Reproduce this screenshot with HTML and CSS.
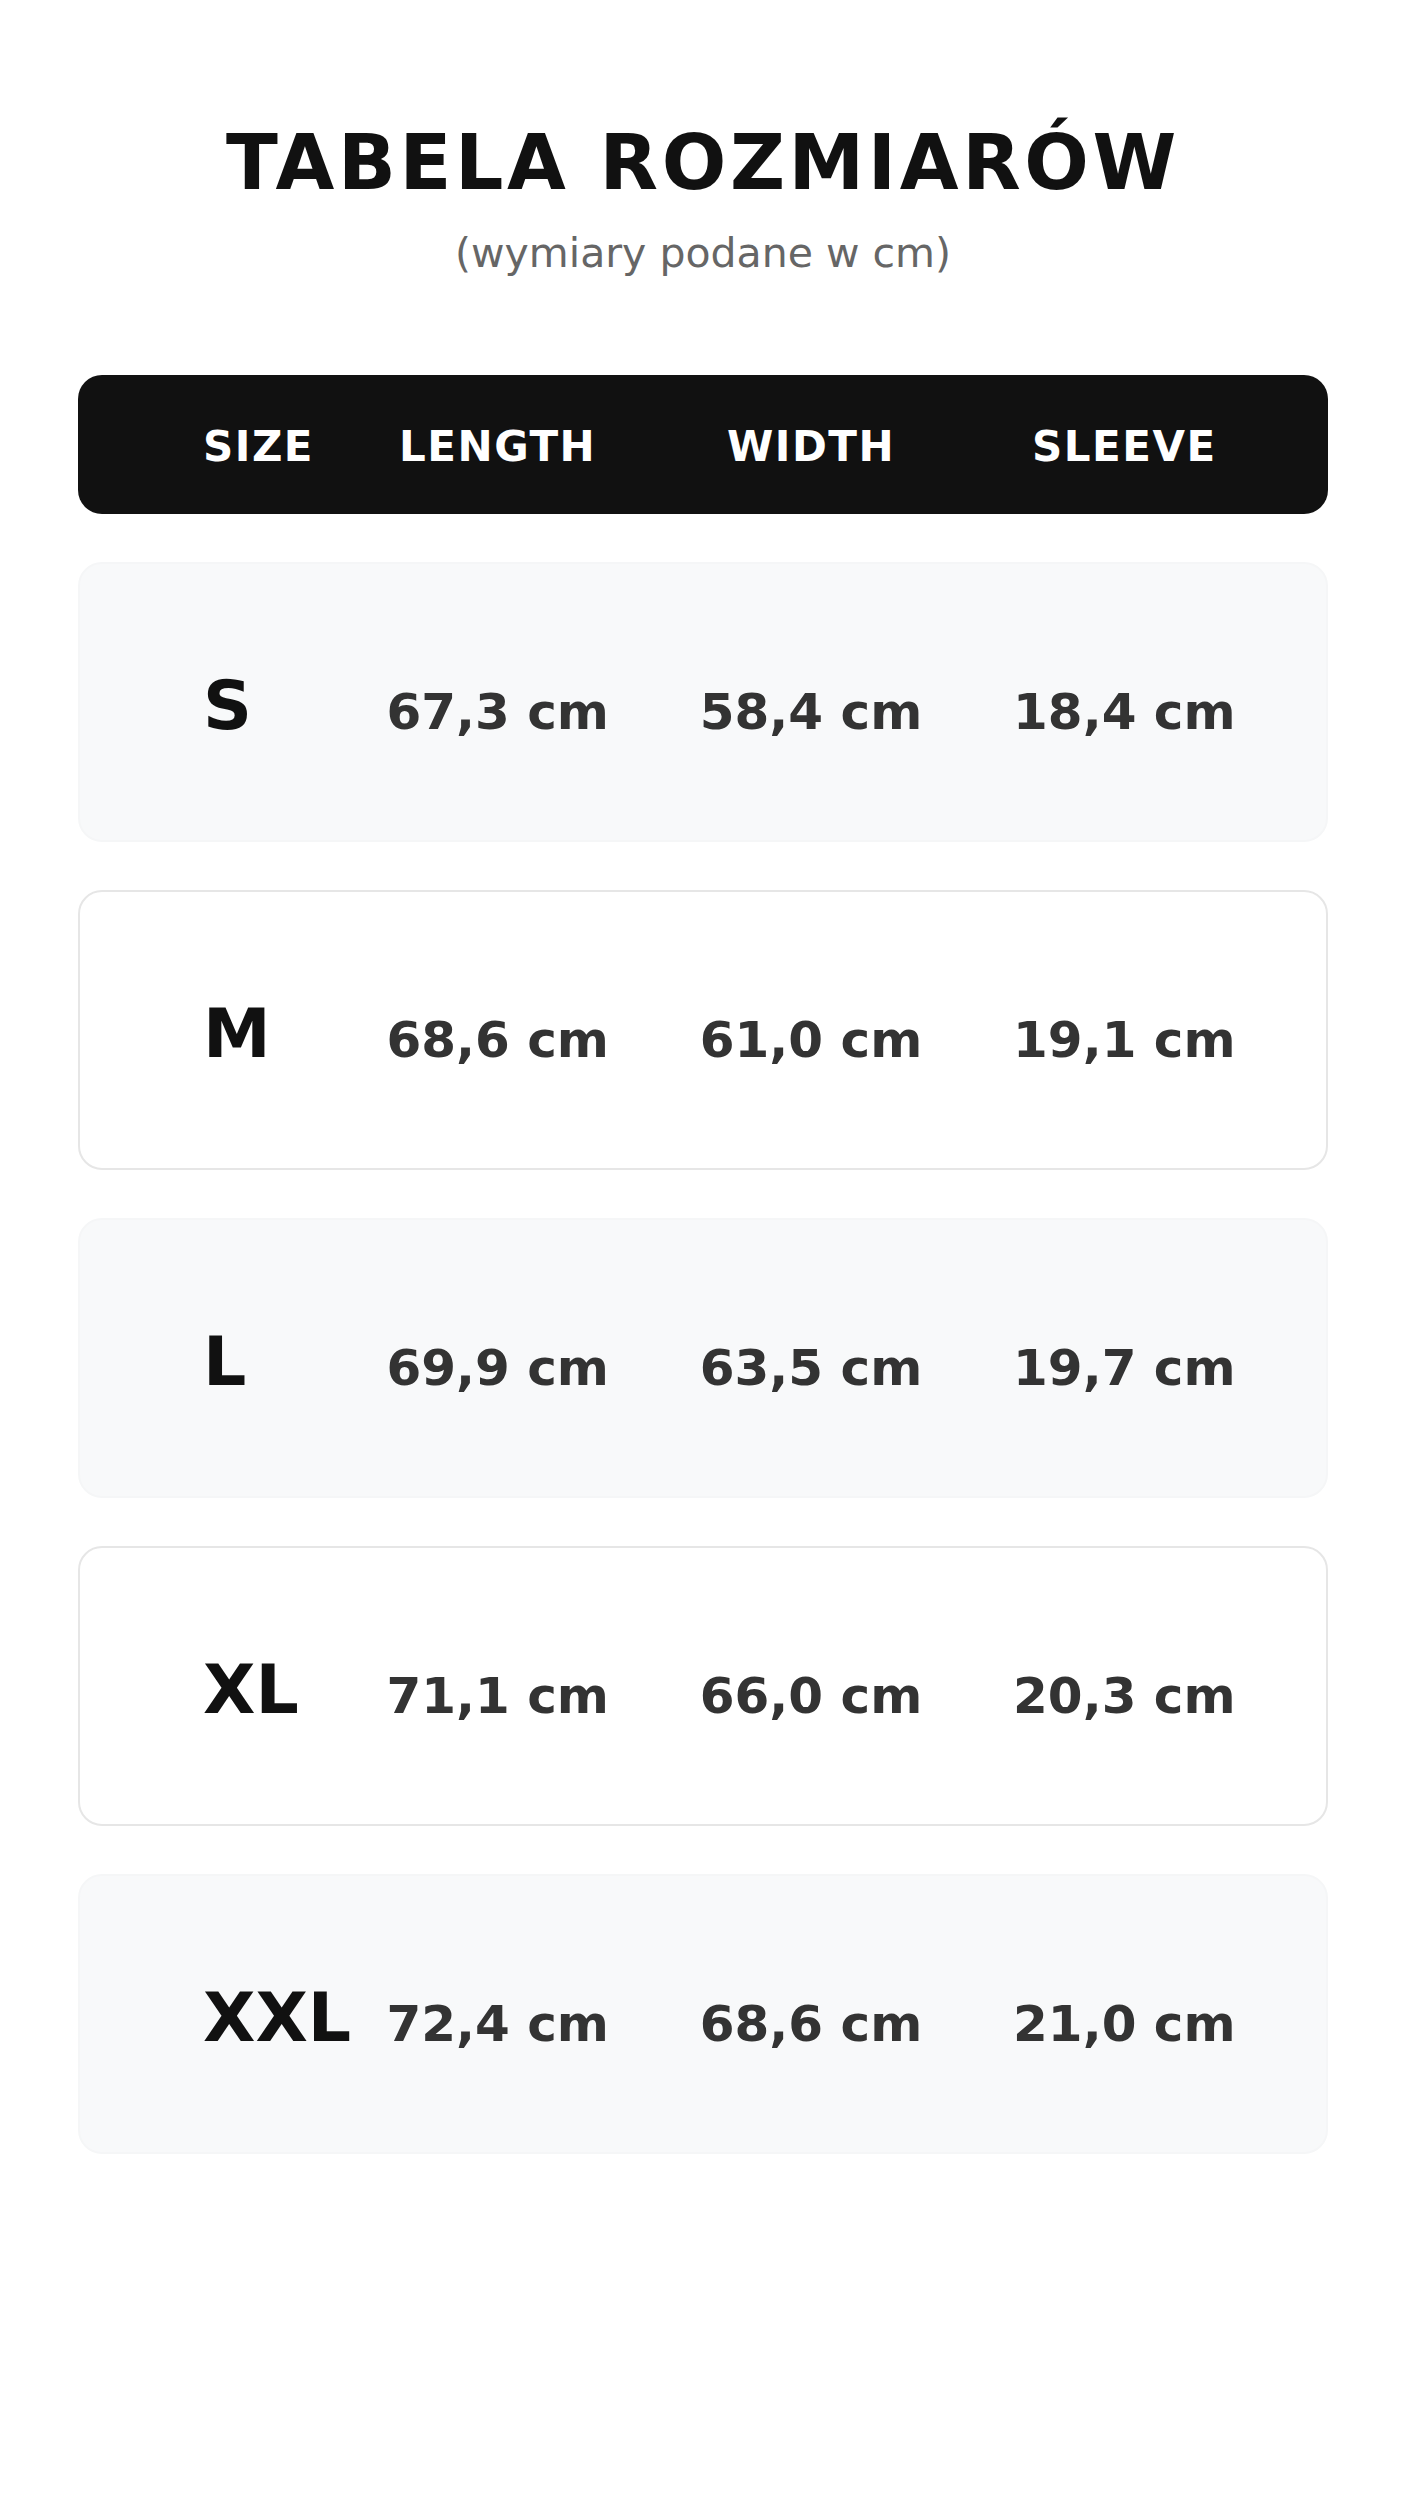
FILE: index.html
```html
<!DOCTYPE html>
<html lang="pl">
<head>
    <meta charset="UTF-8">
    <meta name="viewport" content="width=device-width, initial-scale=1.0">
    <title>Tabela rozmiarów</title>
    <link rel="stylesheet" href="styles.css">
</head>
<body>
    <div class="page">
        <h1 class="title">TABELA ROZMIARÓW</h1>
        <p class="subtitle">(wymiary podane w cm)</p>

        <div class="table">
            <div class="table-head">
                <div class="cell-size">SIZE</div>
                <div class="cell">LENGTH</div>
                <div class="cell">WIDTH</div>
                <div class="cell">SLEEVE</div>
            </div>

            <div class="row row-alt">
                <div class="cell-size">S</div>
                <div class="cell">67,3 cm</div>
                <div class="cell">58,4 cm</div>
                <div class="cell">18,4 cm</div>
            </div>
            <div class="row">
                <div class="cell-size">M</div>
                <div class="cell">68,6 cm</div>
                <div class="cell">61,0 cm</div>
                <div class="cell">19,1 cm</div>
            </div>
            <div class="row row-alt">
                <div class="cell-size">L</div>
                <div class="cell">69,9 cm</div>
                <div class="cell">63,5 cm</div>
                <div class="cell">19,7 cm</div>
            </div>
            <div class="row">
                <div class="cell-size">XL</div>
                <div class="cell">71,1 cm</div>
                <div class="cell">66,0 cm</div>
                <div class="cell">20,3 cm</div>
            </div>
            <div class="row row-alt">
                <div class="cell-size">XXL</div>
                <div class="cell">72,4 cm</div>
                <div class="cell">68,6 cm</div>
                <div class="cell">21,0 cm</div>
            </div>
        </div>
    </div>
</body>
</html>
```

FILE: styles.css
```css
body {
    margin: 0;
    background: #ffffff;
    font-family: "DejaVu Sans", Verdana, sans-serif;
    color: #111111;
}
.page {
    padding: 118px 78px 0;
}
.title {
    margin: 0;
    text-align: center;
    font-size: 76px;
    font-weight: bold;
    letter-spacing: 3.6px;
    color: #111111;
}
.subtitle {
    margin: 22px 0 0;
    text-align: center;
    font-size: 41px;
    color: #666666;
}
.table {
    margin-top: 98px;
    display: flex;
    flex-direction: column;
    gap: 48px;
}
.table-head,
.row {
    display: grid;
    grid-template-columns: 138px repeat(3, 1fr);
    align-items: baseline;
}
.table-head {
    background: #111111;
    color: #ffffff;
    border-radius: 24px;
    padding: 47px 47px 43px 125px;
    font-size: 42px;
    font-weight: bold;
    letter-spacing: 1.5px;
}
.row {
    border: 2px solid #e6e6e6;
    border-radius: 24px;
    background: #ffffff;
    padding: 102px 45px 95px 123px;
}
.row-alt {
    background: #f8f9fa;
    border-color: #f5f6f7;
}
.cell {
    text-align: center;
}
.row .cell {
    font-size: 50px;
    font-weight: bold;
    color: #333333;
}
.row .cell-size {
    font-size: 68px;
    font-weight: bold;
    color: #111111;
    white-space: nowrap;
}
```
